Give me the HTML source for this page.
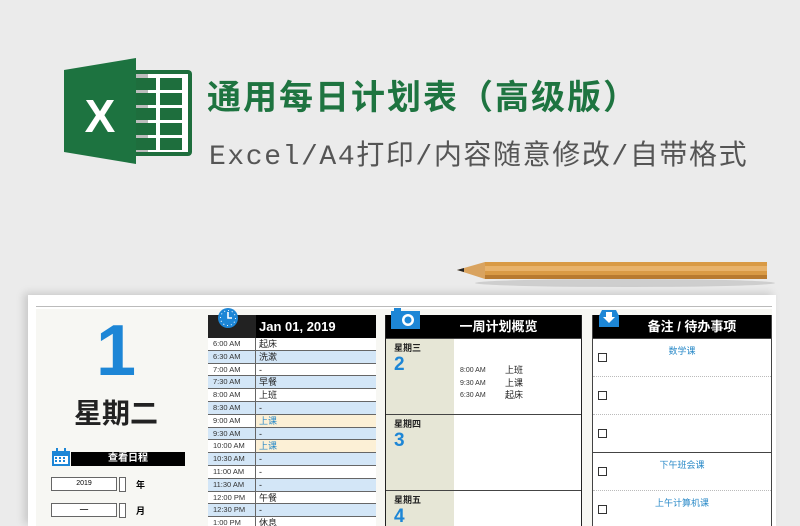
<!DOCTYPE html>
<html><head><meta charset="utf-8"><style>
*{margin:0;padding:0;box-sizing:border-box}
html,body{width:800px;height:526px;overflow:hidden}
body{background:#ebebeb;position:relative;font-family:"Liberation Sans","Noto Sans CJK SC",sans-serif}
#w{position:absolute;left:0;top:0;width:800px;height:526px;overflow:hidden}
.a{position:absolute}
.title{left:207px;top:70px;font-size:34px;font-weight:bold;color:#1e7440;letter-spacing:2px;white-space:nowrap}
.sub{left:209px;top:133px;font-size:28px;color:#555;white-space:nowrap;font-family:"Liberation Mono","Noto Sans CJK SC",monospace;letter-spacing:1.6px}
.paper{left:28px;top:295px;width:748px;height:231px;background:#fff;box-shadow:-4px -2px 8px rgba(0,0,0,.15)}
.inner{left:36px;top:309px;width:736px;height:217px;background:#f7f7f3}
.sched{left:208px;top:315px;width:168px;height:211px;overflow:hidden}
.hd{height:23px;background:#000;color:#fff;font-weight:bold;font-size:13px;display:flex}
.row{display:flex;height:12.8px;font-size:7.5px;border-bottom:1px solid #666;background:#fff}
.row .t{width:48px;padding-left:5px;line-height:12px;border-right:1px solid #666;background:#fff;color:#333}
.row .v{flex:1;padding-left:3px;line-height:12px;color:#222;font-size:9px}
.b .v,.b .t{background:#d3e6f7}
.y .v{background:#fcf0d6;color:#2a8ac8}
.week{left:385px;top:315px;width:197px;height:211px;overflow:hidden;border-left:1px solid #222;border-right:1px solid #222;background:#fff}
.day{height:76px;border-top:1px solid #444;position:relative}
.day .l{position:absolute;left:0;top:0;width:68px;height:100%;background:#e6e6d6}
.day .n{position:absolute;left:8px;top:2px;font-size:9px;font-weight:bold;color:#222}
.day .d{position:absolute;left:8px;top:15px;font-size:19px;font-weight:bold;color:#1d86d6}
.notes{left:592px;top:315px;width:180px;height:211px;overflow:hidden;border-left:1px solid #444;border-right:1px solid #444;background:#fff}
.nr{height:38px;border-top:1px dotted #bbb;position:relative;font-size:9px;color:#2a8ac8;text-align:center;line-height:24px}
.cb{position:absolute;left:5px;top:14px;width:9px;height:9px;border:1px solid #333;background:#fff}
</style></head><body><div id="w">
<svg class="a" style="left:64px;top:58px" width="130" height="106" viewBox="0 0 130 106">
<rect x="66" y="12" width="62" height="86" rx="4" fill="#1e6e3d"/>
<rect x="70" y="16" width="54" height="78" fill="#fff"/>
<rect x="70" y="16" width="14" height="78" fill="#bdbdbd"/>
<g fill="#1e6e3d">
<rect x="72" y="20" width="20" height="12"/><rect x="96" y="20" width="22" height="12"/>
<rect x="72" y="35" width="20" height="12"/><rect x="96" y="35" width="22" height="12"/>
<rect x="72" y="50" width="20" height="12"/><rect x="96" y="50" width="22" height="12"/>
<rect x="72" y="65" width="20" height="12"/><rect x="96" y="65" width="22" height="12"/>
<rect x="72" y="80" width="20" height="12"/><rect x="96" y="80" width="22" height="12"/>
</g>
<polygon points="0,12 72,0 72,106 0,94" fill="#1d7340"/>
<text x="36" y="74" font-size="46" font-weight="bold" fill="#fff" text-anchor="middle" font-family="Liberation Sans">X</text>
</svg>
<div class="a title">通用每日计划表（高级版）</div>
<div class="a sub">Excel/A4打印/内容随意修改/自带格式</div>
<svg class="a" style="left:455px;top:258px" width="320" height="30">
<ellipse cx="170" cy="25" rx="150" ry="4" fill="rgba(0,0,0,.12)"/>
<polygon points="2,12 30,4 30,21" fill="#d9a35f"/>
<polygon points="2,12 9,10 9,14" fill="#222"/>
<rect x="30" y="4" width="282" height="17" fill="#d99a45"/>
<rect x="30" y="8" width="282" height="5" fill="#e8b26a"/>
<rect x="30" y="17" width="282" height="4" fill="#b87a30"/>
</svg>
<div class="a paper"></div>
<div class="a" style="left:36px;top:306px;width:736px;height:1px;background:#bbb"></div>
<div class="a inner"></div>
<div class="a" style="left:96px;top:315px;font-size:72px;font-weight:bold;color:#1d86d6;line-height:72px">1</div>
<div class="a" style="left:74px;top:392px;font-size:28px;font-weight:bold;color:#222">星期二</div>
<svg class="a" style="left:51px;top:448px" width="20" height="19"><rect x="1" y="3" width="18" height="15" fill="#1d86d6"/><rect x="3" y="8" width="14" height="8" fill="#fff"/><g fill="#1d86d6"><rect x="4" y="9" width="2" height="2"/><rect x="8" y="9" width="2" height="2"/><rect x="12" y="9" width="2" height="2"/><rect x="4" y="12" width="2" height="2"/><rect x="8" y="12" width="2" height="2"/><rect x="12" y="12" width="2" height="2"/></g><rect x="5" y="0" width="2" height="5" fill="#1d86d6"/><rect x="13" y="0" width="2" height="5" fill="#1d86d6"/></svg>
<div class="a" style="left:71px;top:452px;width:114px;height:14px;background:#000;color:#fff;font-size:10px;text-align:center;line-height:14px;font-weight:bold">查看日程</div>
<div class="a" style="left:51px;top:477px;width:66px;height:14px;border:1px solid #666;background:#fff;font-size:7px;text-align:center;line-height:12px">2019</div>
<div class="a" style="left:119px;top:477px;width:7px;height:15px;border:1px solid #666;background:#fff"></div>
<div class="a" style="left:136px;top:478px;font-size:9px;font-weight:bold">年</div>
<div class="a" style="left:51px;top:503px;width:66px;height:14px;border:1px solid #666;background:#fff;font-size:9px;text-align:center;line-height:12px">一</div>
<div class="a" style="left:119px;top:503px;width:7px;height:15px;border:1px solid #666;background:#fff"></div>
<div class="a" style="left:136px;top:504px;font-size:9px;font-weight:bold">月</div>

<div class="a sched">
<div class="hd"><div style="width:48px;background:#222"></div><div style="padding-left:3px;line-height:23px">Jan 01, 2019</div></div>
<div class="row"><div class="t">6:00 AM</div><div class="v">起床</div></div>
<div class="row b"><div class="t">6:30 AM</div><div class="v">洗漱</div></div>
<div class="row"><div class="t">7:00 AM</div><div class="v">-</div></div>
<div class="row b"><div class="t">7:30 AM</div><div class="v">早餐</div></div>
<div class="row"><div class="t">8:00 AM</div><div class="v">上班</div></div>
<div class="row b"><div class="t">8:30 AM</div><div class="v">-</div></div>
<div class="row y"><div class="t">9:00 AM</div><div class="v">上课</div></div>
<div class="row b"><div class="t">9:30 AM</div><div class="v">-</div></div>
<div class="row y"><div class="t">10:00 AM</div><div class="v">上课</div></div>
<div class="row b"><div class="t">10:30 AM</div><div class="v">-</div></div>
<div class="row"><div class="t">11:00 AM</div><div class="v">-</div></div>
<div class="row b"><div class="t">11:30 AM</div><div class="v">-</div></div>
<div class="row"><div class="t">12:00 PM</div><div class="v">午餐</div></div>
<div class="row b"><div class="t">12:30 PM</div><div class="v">-</div></div>
<div class="row"><div class="t">1:00 PM</div><div class="v">休息</div></div>
</div>
<svg class="a" style="left:217px;top:307px" width="22" height="22"><circle cx="11" cy="11" r="10" fill="#1d86d6"/><circle cx="11" cy="11" r="7.5" fill="none" stroke="#fff" stroke-width="1" stroke-dasharray="1 2.9"/><path d="M11 5V11H15" stroke="#fff" stroke-width="1.6" fill="none"/></svg>

<div class="a week">
<div class="hd" style="justify-content:center;padding-left:30px;line-height:23px;font-weight:bold;font-size:13px">一周计划概览</div>
<div class="day"><div class="l"></div><div class="n">星期三</div><div class="d">2</div>
<div class="a" style="left:74px;top:26px;font-size:7px;line-height:12.5px;color:#333">8:00 AM<br>9:30 AM<br>6:30 AM</div>
<div class="a" style="left:119px;top:25px;font-size:9px;line-height:12.5px;color:#222">上班<br>上课<br>起床</div></div>
<div class="day"><div class="l"></div><div class="n">星期四</div><div class="d">3</div></div>
<div class="day"><div class="l"></div><div class="n">星期五</div><div class="d">4</div></div>
</div>
<svg class="a" style="left:391px;top:308px" width="30" height="22"><rect x="0" y="3" width="29" height="18" fill="#1d86d6"/><rect x="3" y="0" width="7" height="4" fill="#1d86d6"/><circle cx="17" cy="12" r="6" fill="#fff"/><circle cx="17" cy="12" r="3.5" fill="#1d86d6"/></svg>

<div class="a notes">
<div class="hd" style="justify-content:center;padding-left:20px;line-height:23px;font-size:13px">备注 / 待办事项</div>
<div class="nr" style="border-top:1px solid #444"><div class="cb"></div>数学课</div>
<div class="nr"><div class="cb"></div></div>
<div class="nr"><div class="cb"></div></div>
<div class="nr" style="border-top:1px solid #444"><div class="cb"></div>下午班会课</div>
<div class="nr"><div class="cb"></div>上午计算机课</div>
</div>
<svg class="a" style="left:597px;top:308px" width="24" height="20"><path d="M2 8L5 2H19L22 8V19H2Z" fill="#1d86d6"/><path d="M9 4H15V9H18L12 15L6 9H9Z" fill="#fff"/></svg>
</div></body></html>
